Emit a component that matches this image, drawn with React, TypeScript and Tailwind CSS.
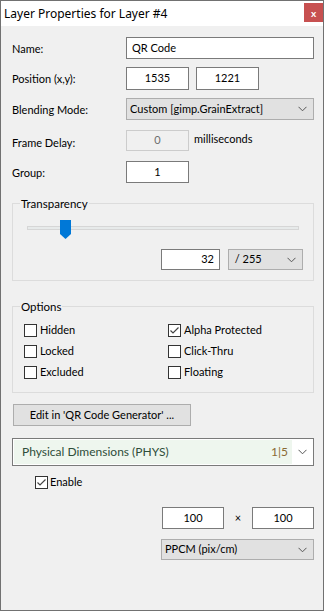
import React from "react";

const titleFont = { fontFamily: '"Segoe UI", "Noto Sans", "Open Sans", sans-serif' };
const bodyFont = { fontFamily: '"Segoe UI", Lato, "Noto Sans", sans-serif' };

function Chevron() {
  return (
    <svg width="9" height="6" viewBox="0 0 9 6" className="shrink-0">
      <path d="M0.5 0.8 L4.5 4.8 L8.5 0.8" fill="none" stroke="#555" strokeWidth="1" />
    </svg>
  );
}

function Check({ checked = false }: { checked?: boolean }) {
  return (
    <span className="w-[13px] h-[13px] border border-[#333] bg-white shrink-0 flex items-center justify-center">
      {checked && (
        <svg width="11" height="11" viewBox="0 0 11 11">
          <path d="M1.5 5.5 L4 8 L9.5 2.5" fill="none" stroke="#444" strokeWidth="1.2" />
        </svg>
      )}
    </span>
  );
}

function Box({ w, value, align = "center" }: { w: string; value: string; align?: "center" | "right" | "left" }) {
  const a = align === "right" ? "justify-end pr-[5px]" : align === "left" ? "justify-start pl-[5px]" : "justify-center";
  return <div className={`${w} h-full border border-[#7a7a7a] bg-white flex items-center ${a}`}>{value}</div>;
}

function Select({ w, value }: { w: string; value: string }) {
  return (
    <div className={`${w} h-full border border-[#adadad] bg-[#e1e1e1] flex items-center pl-[3px] pr-[6px]`}>
      <span className="flex-1 truncate whitespace-pre">{value}</span>
      <Chevron />
    </div>
  );
}

const options: [string, boolean][] = [
  ["Hidden", false],
  ["Alpha Protected", true],
  ["Locked", false],
  ["Click-Thru", false],
  ["Excluded", false],
  ["Floating", false],
];

export default function App() {
  return (
    <div style={bodyFont} className="w-[325px] h-[612px] bg-white">
      <div className="w-[324px] h-[611px] border border-[#717171] bg-[#f0f0f0] text-[11px] text-black flex flex-col">
        {/* title bar */}
        <div className="h-[25px] bg-white flex items-start shrink-0">
          <span style={titleFont} className="text-[12px] pl-[3px] pt-[4px]">
            Layer Properties for Layer #4
          </span>
          <div className="ml-auto mt-[2px] w-[19px] h-[19px] bg-[#c75050] flex items-center justify-center text-white text-[10px] font-bold leading-none">
            x
          </div>
        </div>

        <div className="pl-[11px] pr-[9px] flex flex-col">
          <div className="mt-[11px] h-[22px] flex items-center">
            <span className="w-[114px] pt-[2px]">Name:</span>
            <Box w="w-[188px]" value="QR Code" align="left" />
          </div>

          <div className="mt-[8px] h-[23px] flex items-center">
            <span className="w-[114px] pt-[2px]">Position (x,y):</span>
            <div className="h-full flex gap-[7px]">
              <Box w="w-[63px]" value="1535" />
              <Box w="w-[63px]" value="1221" />
            </div>
          </div>

          <div className="mt-[8px] h-[22px] flex items-center">
            <span className="w-[114px] pt-[2px]">Blending Mode:</span>
            <Select w="w-[188px]" value="Custom [gimp.GrainExtract]" />
          </div>

          <div className="mt-[10px] h-[21px] flex items-center">
            <span className="w-[114px] pt-[5px]">Frame Delay:</span>
            <div className="w-[63px] h-full border border-[#cccccc] bg-[#f0f0f0] text-[#6d6d6d] flex items-center justify-center">0</div>
            <span className="ml-[5px] pb-[2px]">milliseconds</span>
          </div>

          <div className="mt-[10px] h-[22px] flex items-center">
            <span className="w-[114px] pt-[2px]">Group:</span>
            <Box w="w-[63px]" value="1" />
          </div>

          {/* Transparency */}
          <div className="relative mt-[20px] w-[302px] h-[78px] border border-[#dcdcdc] flex flex-col">
            <span className="absolute -top-[9px] left-[7px] px-[1px] bg-[#f0f0f0] text-[11.5px]">Transparency</span>
            <div className="relative mt-[16px] ml-[14px] w-[272px] h-[19px]">
              <div className="absolute top-[6px] left-0 w-[272px] h-[4px] bg-[#e7eaea] border border-[#d6d6d6]" />
              <svg className="absolute top-0 left-[33px]" width="11" height="19" viewBox="0 0 11 19">
                <polygon points="0,0 11,0 11,14 5.5,19 0,14" fill="#0078d7" />
              </svg>
            </div>
            <div className="mt-[10px] h-[21px] flex justify-end gap-[8px] pr-[10px]">
              <Box w="w-[59px]" value="32" align="right" />
              <Select w="w-[75px]" value=" / 255" />
            </div>
          </div>

          {/* Options */}
          <div className="relative mt-[25px] w-[302px] h-[87px] border border-[#dcdcdc]">
            <span className="absolute -top-[9px] left-[7px] px-[1px] bg-[#f0f0f0] text-[11.5px]">Options</span>
            <div className="mt-[17px] ml-[11px] grid grid-cols-[144px_1fr] gap-y-[8px]">
              {options.map(([label, checked]) => (
                <div key={label} className="h-[13px] flex items-center gap-[2px]">
                  <Check checked={checked} />
                  <span className="pl-[1px]">{label}</span>
                </div>
              ))}
            </div>
          </div>

          <div className="mt-[11px] ml-[1px] w-[178px] h-[22px] border border-[#adadad] bg-[#e1e1e1] flex items-center justify-center">
            Edit in 'QR Code Generator' ...
          </div>

          {/* Physical dimensions */}
          <div className="mt-[12px] w-[302px] h-[28px] border border-[#7a7a7a] bg-white flex items-stretch p-[1px]">
            <div className="flex-1 bg-[#eef6ee] flex items-center pl-[8px] pr-[4px] text-[12px] text-[#2f4d3a]">
              <span className="flex-1">Physical Dimensions (PHYS)</span>
              <span className="text-[#8a6a34]">1|5</span>
            </div>
            <div className="w-[20px] flex items-center justify-center">
              <Chevron />
            </div>
          </div>

          <div className="mt-[9px] ml-[23px] h-[14px] flex items-center gap-[2px]">
            <Check checked />
            <span>Enable</span>
          </div>

          <div className="mt-[18px] h-[22px] flex items-center pl-[150px]">
            <Box w="w-[62px]" value="100" />
            <span className="w-[28px] text-center">×</span>
            <Box w="w-[62px]" value="100" />
          </div>

          <div className="mt-[10px] ml-[149px] h-[21px]">
            <Select w="w-[153px]" value="PPCM (pix/cm)" />
          </div>
        </div>
      </div>
    </div>
  );
}
